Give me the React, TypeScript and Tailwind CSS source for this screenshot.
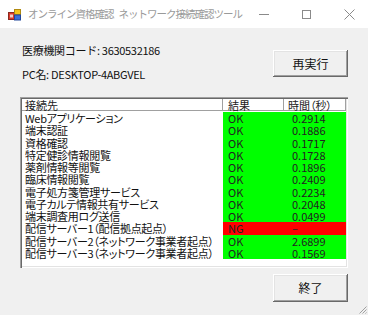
import React from "react";

const rows: [string, string, string][] = [
  ["Webアプリケーション", "OK", "0.2914"],
  ["端末認証", "OK", "0.1886"],
  ["資格確認", "OK", "0.1717"],
  ["特定健診情報閲覧", "OK", "0.1728"],
  ["薬剤情報等閲覧", "OK", "0.1896"],
  ["臨床情報閲覧", "OK", "0.2409"],
  ["電子処方箋管理サービス", "OK", "0.2234"],
  ["電子カルテ情報共有サービス", "OK", "0.2048"],
  ["端末調査用ログ送信", "OK", "0.0499"],
  ["配信サーバー1（配信拠点起点）", "NG", "–"],
  ["配信サーバー2（ネットワーク事業者起点）", "OK", "2.6899"],
  ["配信サーバー3（ネットワーク事業者起点）", "OK", "0.1569"],
];

function AppIcon() {
  return (
    <svg width="13" height="12" viewBox="0 0 13 12">
      <rect x="0.5" y="3.5" width="6" height="7" fill="#d93a2b" stroke="#8a2a20" />
      <rect x="2" y="5.5" width="3" height="3" fill="#f2d0c8" />
      <rect x="6.5" y="0.5" width="6" height="5" fill="#f5c518" stroke="#b08a10" />
      <rect x="6.5" y="6" width="6" height="5" fill="#3a6fd8" stroke="#22479a" />
    </svg>
  );
}

function Btn({ label, className }: { label: string; className: string }) {
  return (
    <div
      className={
        "w-[75px] flex items-center justify-center bg-[#f0f0f0] text-[12px] text-[#111] shadow-[inset_-1px_-1px_#696969,inset_1px_1px_#ffffff,inset_-2px_-2px_#a0a0a0,inset_2px_2px_#e3e3e3] " +
        className
      }
    >
      {label}
    </div>
  );
}

export default function App() {
  return (
    <div className='w-[368px] h-[315px] bg-[#f0f0f0] overflow-hidden flex flex-col font-["Noto_Sans_CJK_JP",sans-serif] text-black'>
      {/* Title bar */}
      <div className="h-[28px] bg-white flex items-center shrink-0">
        <div className="ml-[8px] mt-[2px] flex items-center shrink-0">
          <AppIcon />
        </div>
        <div className="ml-[7px] text-[10.5px] tracking-[-1px] leading-[16px] text-[#9a9a9a] flex-1 min-w-0 whitespace-nowrap flex">
          <span>オンライン資格確認</span>
          <span className="ml-[5px]">ネットワーク接続確認ツール</span>
        </div>
        <div className="flex mr-[-3px] h-full shrink-0">
          <div className="w-[43px] h-full flex items-center justify-center">
            <div className="w-[10px] h-[1px] bg-[#8a8a8a]" />
          </div>
          <div className="w-[43px] h-full flex items-center justify-center">
            <div className="w-[9px] h-[9px] border border-[#8a8a8a]" />
          </div>
          <div className="w-[43px] h-full flex items-center justify-center">
            <svg width="11" height="11" viewBox="0 0 11 11">
              <path d="M0.5 0.5 L10.5 10.5 M10.5 0.5 L0.5 10.5" stroke="#8a8a8a" strokeWidth="1" />
            </svg>
          </div>
        </div>
      </div>

      {/* Body */}
      <div className="flex-1 flex flex-col px-[20px]">
        <div className="h-[69px] flex justify-between shrink-0">
          <div className="flex flex-col pl-[2px] pt-[14px] gap-[8px] text-[11px] tracking-[-0.3px] leading-[16px] text-[#111]">
            <div>医療機関コード: 3630532186</div>
            <div>PC名: DESKTOP-4ABGVEL</div>
          </div>
          <Btn label="再実行" className="mt-[22px] h-[27px]" />
        </div>

        {/* List view */}
        <div className='h-[171px] bg-white p-[2px] shadow-[inset_1px_1px_#a0a0a0,inset_2px_2px_#696969,inset_-1px_-1px_#ffffff,inset_-2px_-2px_#e3e3e3] flex flex-col [font-feature-settings:"palt"_on]'>
          <div className="flex h-[12px] text-[11px] leading-[12px] text-[#222] shrink-0">
            <div className="w-[201px] border-r border-b border-[#a0a0a0] pl-[3px]">接続先</div>
            <div className="w-[61px] border-r border-b border-[#a0a0a0] pl-[5px]">結果</div>
            <div className="w-[62px] border-r border-b border-[#a0a0a0] pl-[4px]">時間（秒）</div>
          </div>
          <div className="mt-[1px] flex flex-col">
            {rows.map(([name, res, t], i) => {
              const bg = res === "NG" ? "bg-[#ff0000]" : "bg-[#00ff00]";
              return (
                <div key={i} className="flex h-[12.25px] text-[11px] leading-[12.25px]">
                  <div className="w-[201px] pl-[3px] tracking-[-0.3px] whitespace-nowrap text-[#111]">{name}</div>
                  <div className={"w-[61px] pl-[5px] text-[#222] " + bg}>{res}</div>
                  <div className={"w-[62px] pl-[8px] text-[#222] " + bg}>{t}</div>
                </div>
              );
            })}
          </div>
        </div>

        <div className="flex justify-end mt-[6px]">
          <Btn label="終了" className="h-[28px]" />
        </div>
      </div>

      {/* Resize grip */}
      <div className="h-0 flex justify-end relative">
        <svg className="absolute right-[1px] bottom-[1px]" width="10" height="10" viewBox="0 0 10 10">
          <path d="M9.5 2.5 L2.5 9.5 M9.5 5.5 L5.5 9.5 M9.5 8.5 L8.5 9.5" stroke="#a0a0a0" strokeWidth="1" />
        </svg>
      </div>
    </div>
  );
}
